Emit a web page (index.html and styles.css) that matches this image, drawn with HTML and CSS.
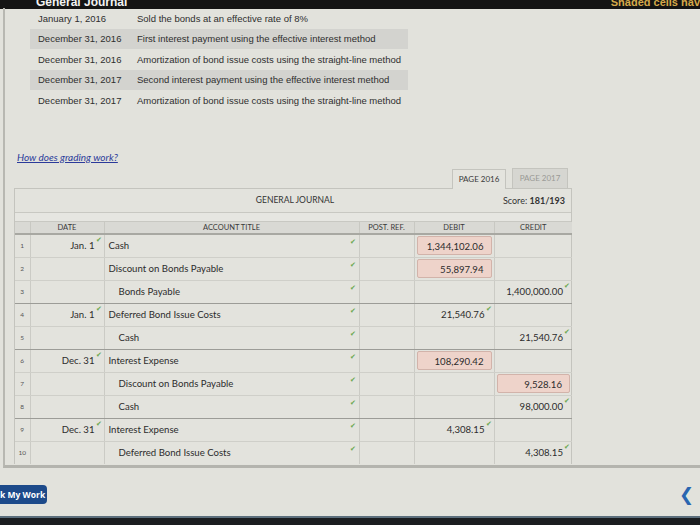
FILE: index.html
```html
<!DOCTYPE html>
<html>
<head>
<meta charset="utf-8">
<link rel="stylesheet" href="styles.css">
</head>
<body>
<div class="topbar">
  <span class="tb-title">General Journal</span>
  <span class="tb-shaded">Shaded cells hav</span>
</div>
<div class="main">
  <table class="events">
    <tr><td class="ev-date">January 1, 2016</td><td class="ev-desc">Sold the bonds at an effective rate of 8%</td></tr>
    <tr class="shade"><td class="ev-date">December 31, 2016</td><td class="ev-desc">First interest payment using the effective interest method</td></tr>
    <tr><td class="ev-date">December 31, 2016</td><td class="ev-desc">Amortization of bond issue costs using the straight-line method</td></tr>
    <tr class="shade"><td class="ev-date">December 31, 2017</td><td class="ev-desc">Second interest payment using the effective interest method</td></tr>
    <tr><td class="ev-date">December 31, 2017</td><td class="ev-desc">Amortization of bond issue costs using the straight-line method</td></tr>
  </table>

  <a class="grading" href="#">How does grading work?</a>

  <div class="journal">
    <div class="tabs">
      <span class="tab active">PAGE 2016</span>
      <span class="tab">PAGE 2017</span>
    </div>
    <div class="panel">
      <div class="panel-head">
        <div class="gj">GENERAL JOURNAL</div>
        <div class="score">Score: <b>181/193</b></div>
      </div>
      <div class="spacer"></div>
      <table class="gl">
        <colgroup>
          <col class="c-num"><col class="c-date"><col class="c-acct"><col class="c-ref"><col class="c-deb"><col class="c-cred">
        </colgroup>
        <thead>
          <tr><th></th><th>DATE</th><th>ACCOUNT TITLE</th><th>POST. REF.</th><th>DEBIT</th><th>CREDIT</th></tr>
        </thead>
        <tbody>
          <tr>
            <td class="num">1</td>
            <td class="date"><span class="ok">Jan. 1</span></td>
            <td class="acct"><div class="acct-in"><span>Cash</span><span class="tick">✔</span></div></td>
            <td></td>
            <td class="amt"><div class="wrong">1,344,102.06</div></td>
            <td class="amt"></td>
          </tr>
          <tr>
            <td class="num">2</td>
            <td class="date"></td>
            <td class="acct"><div class="acct-in"><span>Discount on Bonds Payable</span><span class="tick">✔</span></div></td>
            <td></td>
            <td class="amt"><div class="wrong">55,897.94</div></td>
            <td class="amt"></td>
          </tr>
          <tr class="end">
            <td class="num">3</td>
            <td class="date"></td>
            <td class="acct"><div class="acct-in"><span class="ind">Bonds Payable</span><span class="tick">✔</span></div></td>
            <td></td>
            <td class="amt"></td>
            <td class="amt"><span class="ok">1,400,000.00</span></td>
          </tr>
          <tr>
            <td class="num">4</td>
            <td class="date"><span class="ok">Jan. 1</span></td>
            <td class="acct"><div class="acct-in"><span>Deferred Bond Issue Costs</span><span class="tick">✔</span></div></td>
            <td></td>
            <td class="amt"><span class="ok">21,540.76</span></td>
            <td class="amt"></td>
          </tr>
          <tr class="end">
            <td class="num">5</td>
            <td class="date"></td>
            <td class="acct"><div class="acct-in"><span class="ind">Cash</span><span class="tick">✔</span></div></td>
            <td></td>
            <td class="amt"></td>
            <td class="amt"><span class="ok">21,540.76</span></td>
          </tr>
          <tr>
            <td class="num">6</td>
            <td class="date"><span class="ok">Dec. 31</span></td>
            <td class="acct"><div class="acct-in"><span>Interest Expense</span><span class="tick">✔</span></div></td>
            <td></td>
            <td class="amt"><div class="wrong">108,290.42</div></td>
            <td class="amt"></td>
          </tr>
          <tr>
            <td class="num">7</td>
            <td class="date"></td>
            <td class="acct"><div class="acct-in"><span class="ind">Discount on Bonds Payable</span><span class="tick">✔</span></div></td>
            <td></td>
            <td class="amt"></td>
            <td class="amt"><div class="wrong">9,528.16</div></td>
          </tr>
          <tr class="end">
            <td class="num">8</td>
            <td class="date"></td>
            <td class="acct"><div class="acct-in"><span class="ind">Cash</span><span class="tick">✔</span></div></td>
            <td></td>
            <td class="amt"></td>
            <td class="amt"><span class="ok">98,000.00</span></td>
          </tr>
          <tr>
            <td class="num">9</td>
            <td class="date"><span class="ok">Dec. 31</span></td>
            <td class="acct"><div class="acct-in"><span>Interest Expense</span><span class="tick">✔</span></div></td>
            <td></td>
            <td class="amt"><span class="ok">4,308.15</span></td>
            <td class="amt"></td>
          </tr>
          <tr class="last">
            <td class="num">10</td>
            <td class="date"></td>
            <td class="acct"><div class="acct-in"><span class="ind">Deferred Bond Issue Costs</span><span class="tick">✔</span></div></td>
            <td></td>
            <td class="amt"></td>
            <td class="amt"><span class="ok">4,308.15</span></td>
          </tr>
        </tbody>
      </table>
    </div>
  </div>
</div>
<div class="footer">
  <button class="check-btn">k My Work</button>
  <span class="chev">&#10094;</span>
</div>
<div class="bottombar"></div>
</body>
</html>
```
FILE: styles.css
```css
* { box-sizing: border-box; }
html, body { margin: 0; padding: 0; }
body {
  width: 700px;
  height: 525px;
  overflow: hidden;
  background: #e2e2dc;
  font-family: "Liberation Sans", Arial, sans-serif;
  color: #333;
}

.topbar {
  height: 9px;
  background: #141414;
  display: flex;
  justify-content: space-between;
  align-items: flex-end;
  overflow: hidden;
  font-weight: bold;
  font-size: 12px;
  line-height: 9px;
}
.tb-title {
  color: #f2f2f2;
  margin-left: 36px;
  position: relative;
  top: -2px;
}
.tb-shaded {
  color: #d4a94a;
  font-size: 11px;
  position: relative;
  top: -2px;
}

.main {
  margin-left: 3px;
  border-left: 2px solid #b8b8b2;
  border-bottom: 3px solid #b4b4ae;
  padding-bottom: 1px;
}

.events {
  border-collapse: collapse;
  margin-left: 25px;
  margin-top: -1px;
  width: 378px;
  font-size: 9.5px;
  color: #2e2e2e;
}
.events td {
  height: 20.5px;
  padding: 0;
  white-space: nowrap;
}
.events tr.shade td { background: #d3d3cf; }
.ev-date { padding-left: 8px !important; width: 107px; }

.grading {
  display: block;
  margin: 39px 0 4px 12px;
  font-family: Lato, "Open Sans", sans-serif;
  font-style: italic;
  font-size: 10px;
  line-height: 14px;
  color: #2b3a9a;
  text-decoration: underline;
  width: max-content;
}

.journal {
  margin-left: 9px;
  width: 558px;
  font-family: Lato, "Open Sans", sans-serif;
}
.tabs {
  display: flex;
  justify-content: flex-end;
  gap: 6px;
  padding-right: 4px;
  height: 20px;
}
.tab {
  width: 56px;
  height: 20px;
  font-size: 8px;
  display: flex;
  align-items: center;
  justify-content: center;
  border: 1px solid #c4c4be;
  border-bottom: none;
  background: #d6d6d1;
  color: #9a9a96;
}
.tab.active {
  width: 54px;
  background: #e4e4de;
  color: #3a3a3a;
  position: relative;
  top: 1px;
}

.panel {
  border: 1px solid #c4c4be;
  border-bottom: none;
  background: #e3e3dd;
}
.panel-head {
  height: 24px;
  display: flex;
  align-items: center;
  border-bottom: 1px solid #c8c8c2;
}
.gj {
  flex: 1;
  text-align: center;
  font-size: 8.5px;
  color: #333;
  padding-left: 72px;
}
.score {
  font-size: 9px;
  color: #333;
  padding-right: 6px;
}
.score b { font-weight: bold; }
.spacer { height: 9px; border-bottom: 1px solid #c8c8c2; background: #e6e6e1; }

.gl {
  border-collapse: collapse;
  width: 557px;
  table-layout: fixed;
  font-size: 9.6px;
  color: #2c2c2c;
}
.c-num { width: 15px; }
.c-date { width: 74px; }
.c-acct { width: 255px; }
.c-ref { width: 55px; }
.c-deb { width: 80px; }
.c-cred { width: 78px; }

.gl th {
  height: 12px;
  padding: 0;
  font-size: 7.5px;
  font-weight: normal;
  color: #3a3a3a;
  background: #d9d9d4;
  border-bottom: 2px solid #a8a8a2;
  border-left: 1px solid #c8c8c2;
  text-align: center;
}
.gl th:first-child { border-left: none; }
.gl td {
  height: 23px;
  padding: 0;
  border-left: 1px solid #cbcbc5;
  border-bottom: 1px solid #cfcfc9;
  vertical-align: middle;
}
.gl td:first-child { border-left: none; }
.gl tr.end td { border-bottom: 1px solid #9c9c97; }
.gl tr.last td { border-bottom: none; }

.num {
  font-size: 6.5px;
  text-align: center;
  color: #555;
}
.date {
  text-align: right;
  padding-right: 9px !important;
}
.acct { padding: 0 !important; }
.acct-in {
  display: flex;
  justify-content: space-between;
  align-items: flex-start;
  height: 22px;
}
.acct-in span:first-child {
  padding-left: 4px;
  line-height: 22px;
}
.acct-in span.ind { padding-left: 14px; }
.tick {
  color: #6aa84f;
  font-size: 7px;
  line-height: 1;
  margin-top: 3px;
  margin-right: 3px;
}

.amt {
  text-align: right;
  padding-right: 9px !important;
}
.wrong {
  margin: 0 -7px 0 2px;
  height: 19px;
  line-height: 19px;
  padding-right: 7px;
  background: #eed3ca;
  border: 1px solid #d2b3aa;
  border-radius: 2px;
}
.ok { position: relative; }
.ok::after {
  content: "✔";
  position: absolute;
  left: 100%;
  top: -5px;
  margin-left: 1px;
  font-size: 7px;
  color: #6aa84f;
}

.footer {
  height: 48px;
  display: flex;
  align-items: center;
  justify-content: space-between;
  padding-top: 4px;
}
.check-btn {
  height: 19px;
  width: 47px;
  border: none;
  border-radius: 0 4px 4px 0;
  background: #1d4a8a;
  color: #fff;
  font-family: "Open Sans", Lato, sans-serif;
  font-weight: bold;
  font-size: 8.5px;
  white-space: nowrap;
  text-align: right;
  padding: 0 4px 0 0;
}
.chev {
  color: #2a66b0;
  font-size: 18px;
  font-weight: bold;
  margin-right: 6px;
  font-family: "DejaVu Sans", sans-serif;
}
.bottombar {
  height: 10px;
  background: #1b1d20;
  border-top: 2px solid #5c6e7c;
}
```
